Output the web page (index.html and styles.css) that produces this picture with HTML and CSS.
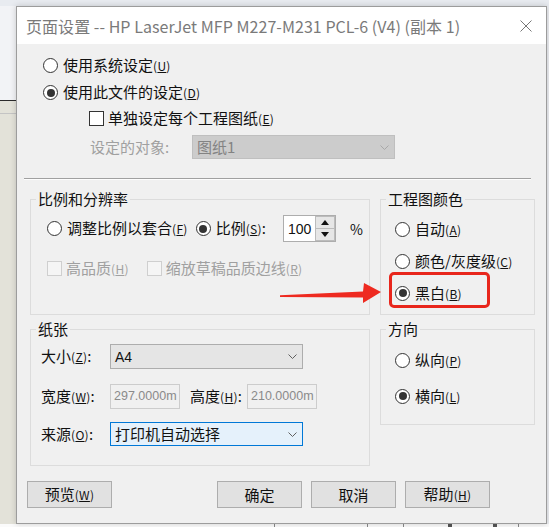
FILE: index.html
```html
<!DOCTYPE html>
<html lang="zh-CN">
<head>
<meta charset="utf-8">
<title>页面设置</title>
<link rel="stylesheet" href="styles.css">
</head>
<body>
<div class="dialog">
  <div class="titlebar">
    <span class="title">页面设置 -- HP LaserJet MFP M227-M231 PCL-6 (V4) (副本 1)</span>
    <svg class="close" width="12" height="12" viewBox="0 0 12 12"><path d="M0.5 0.5L11.5 11.5M11.5 0.5L0.5 11.5"/></svg>
  </div>
  <div class="body">
    <div class="top">
      <div class="row r1"><span class="radio"></span><span>使用系统设定<span class="mn">(<u>U</u>)</span></span></div>
      <div class="row r2"><span class="radio on"></span><span>使用此文件的设定<span class="mn">(<u>D</u>)</span></span></div>
      <div class="row r3"><span class="check"></span><span>单独设定每个工程图纸<span class="mn">(<u>E</u>)</span></span></div>
      <div class="row r4">
        <span class="lbl-dis">设定的对象:</span>
        <div class="combo dis"><span class="ctext">图纸1</span><svg class="chev" width="9" height="5" viewBox="0 0 9 5"><path d="M0.5 0.5L4.5 4.5L8.5 0.5"/></svg></div>
      </div>
    </div>
    <div class="sep"></div>
    <div class="grouprow g1">
      <fieldset class="grp scale">
        <legend>比例和分辨率</legend>
        <div class="srow">
          <span class="radio"></span><span>调整比例以套合<span class="mn">(<u>F</u>)</span></span>
          <span class="radio on r-scale"></span><span>比例<span class="mn">(<u>S</u>)</span>:</span>
          <div class="spin"><span class="stext">100</span>
            <div class="sbtns">
              <span class="sbtn"><svg width="8" height="5" viewBox="0 0 8 5"><path d="M4 0L8 5H0Z"/></svg></span>
              <span class="sbtn"><svg width="8" height="5" viewBox="0 0 8 5"><path d="M0 0H8L4 5Z"/></svg></span>
            </div>
          </div>
          <span class="pct">%</span>
        </div>
        <div class="crow">
          <span class="check dis"></span><span class="distext">高品质<span class="mn">(<u>H</u>)</span></span>
          <span class="check dis c2"></span><span class="distext">缩放草稿品质边线<span class="mn">(<u>R</u>)</span></span>
        </div>
      </fieldset>
      <fieldset class="grp color">
        <legend>工程图颜色</legend>
        <div class="crad"><span class="radio"></span><span>自动<span class="mn">(<u>A</u>)</span></span></div>
        <div class="crad"><span class="radio"></span><span>颜色/灰度级<span class="mn">(<u>C</u>)</span></span></div>
        <div class="crad"><span class="radio on"></span><span>黑白<span class="mn">(<u>B</u>)</span></span></div>
      </fieldset>
    </div>
    <div class="grouprow g2">
      <fieldset class="grp paper">
        <legend>纸张</legend>
        <div class="prow p1">
          <span class="plbl">大小<span class="mn">(<u>Z</u>)</span>:</span>
          <div class="combo size"><span class="ctext latin">A4</span><svg class="chev" width="9" height="5" viewBox="0 0 9 5"><path d="M0.5 0.5L4.5 4.5L8.5 0.5"/></svg></div>
        </div>
        <div class="prow p2">
          <span class="plbl">宽度<span class="mn">(<u>W</u>)</span>:</span>
          <div class="field">297.0000m</div>
          <span class="hlbl">高度<span class="mn">(<u>H</u>)</span>:</span>
          <div class="field">210.0000m</div>
        </div>
        <div class="prow p3">
          <span class="plbl">来源<span class="mn">(<u>O</u>)</span>:</span>
          <div class="combo src"><span class="ctext">打印机自动选择</span><svg class="chev" width="9" height="5" viewBox="0 0 9 5"><path d="M0.5 0.5L4.5 4.5L8.5 0.5"/></svg></div>
        </div>
      </fieldset>
      <fieldset class="grp orient">
        <legend>方向</legend>
        <div class="orad"><span class="radio"></span><span>纵向<span class="mn">(<u>P</u>)</span></span></div>
        <div class="orad"><span class="radio on"></span><span>横向<span class="mn">(<u>L</u>)</span></span></div>
      </fieldset>
    </div>
    <div class="buttons">
      <button class="btn">预览<span class="mn">(<u>W</u>)</span></button>
      <button class="btn ok">确定</button>
      <button class="btn">取消</button>
      <button class="btn">帮助<span class="mn">(<u>H</u>)</span></button>
    </div>
  </div>
</div>
<div class="mark-box"></div>
<svg class="mark-arrow" width="106" height="26" viewBox="0 0 106 26"><path d="M2 15.2L85 11.6L86 3L103 12L85 23L85 17.4L2 16.9Z"/></svg>
</body>
</html>
```
FILE: styles.css
```css
* { box-sizing: border-box; }
html, body { margin: 0; padding: 0; }
body {
  width: 549px;
  height: 527px;
  overflow: hidden;
  position: relative;
  font-family: "Noto Sans CJK SC", "Noto Sans", sans-serif;
  font-size: 15px;
  color: #111;
  background:
    linear-gradient(#e8ebf0, #e8ebf0) 0 0 / 100% 6px no-repeat,
    linear-gradient(#8a8a8a, #8a8a8a) 274px 524px / 1px 3px no-repeat,
    linear-gradient(#8a8a8a, #8a8a8a) 367px 524px / 1px 3px no-repeat,
    linear-gradient(#8a8a8a, #8a8a8a) 403px 524px / 1px 3px no-repeat,
    linear-gradient(#555, #555) 448px 524px / 4px 3px no-repeat,
    linear-gradient(#555, #555) 493px 524px / 4px 3px no-repeat,
    linear-gradient(#8a8a8a, #8a8a8a) 518px 524px / 1px 3px no-repeat,
    linear-gradient(#fbfbfb, #fbfbfb) 0 524px / 100% 3px no-repeat,
    linear-gradient(to bottom, #f2f3f6 0 100px, #2b2b2b 100px 101px, #e3e2d9 101px 113px, #c4c4c4 113px 114px, #e3e2d9 114px) 0 0 / 16px 100% no-repeat,
    #eceef2;
}

.dialog {
  position: absolute;
  left: 16px;
  top: 6px;
  width: 531px;
  height: 518px;
  border: 1px solid #9c9c9c;
  background: #f0f0f0;
  box-shadow: 0 0 6px rgba(0, 0, 0, 0.18);
  display: flex;
  flex-direction: column;
}

.titlebar {
  height: 37px;
  flex: none;
  background: #fff;
  display: flex;
  align-items: center;
  padding: 0 14px 0 9px;
}
.title {
  flex: 1;
  color: #7a7a7a;
  font-size: 16px;
  letter-spacing: 0.05px;
  white-space: nowrap;
  line-height: 20px;
}
.close path { stroke: #777; stroke-width: 1; fill: none; }

.body { flex: 1; display: flex; flex-direction: column; }

.mn { font-size: 12px; letter-spacing: 0.3px; }
.mn u { text-underline-offset: 1px; }

.radio {
  width: 15px;
  height: 15px;
  flex: none;
  border: 1px solid #333;
  border-radius: 50%;
  background: #fff;
  display: inline-flex;
  align-items: center;
  justify-content: center;
  margin-right: 5px;
}
.radio.on::after {
  content: "";
  width: 8px;
  height: 8px;
  border-radius: 50%;
  background: #333;
}
.check {
  width: 15px;
  height: 15px;
  flex: none;
  border: 1px solid #333;
  background: #fff;
  margin-right: 4px;
}
.check.dis { border-color: #cfcfcf; background: #f5f5f5; }

.top { padding: 8px 0 0 26px; }
.row { display: flex; align-items: center; line-height: 20px; }
.r1, .r2 { height: 27px; }
.r3 { height: 25px; padding-left: 46px; }
.r4 { height: 24px; margin-top: 4px; padding-left: 47px; }
.lbl-dis { width: 102px; color: #a0a0a0; }

.combo {
  height: 24px;
  display: flex;
  align-items: center;
  padding: 0 5px 0 4px;
  border: 1px solid #adadad;
  background: #e5e5e5;
  line-height: 20px;
}
.ctext { flex: 1; white-space: nowrap; }
.ctext.latin { font-family: "Liberation Sans", sans-serif; font-size: 14px; }
.chev path { stroke: #606060; stroke-width: 1; fill: none; }
.combo.dis { width: 203px; background: #cccccc; border-color: #bfbfbf; color: #838383; }
.combo.dis .chev path { stroke: #a8a8a8; }

.sep {
  height: 2px;
  margin: 19px 15px 0 7px;
  border-top: 1px solid #a0a0a0;
  border-bottom: 1px solid #fdfdfd;
}

.grouprow { display: flex; gap: 10px; margin-left: 13px; align-items: flex-start; }
.g1 { margin-top: 9px; }
.g2 { margin-top: 4px; }

.grp {
  margin: 0;
  padding: 0;
  border: 1px solid #dcdcdc;
  min-width: 0;
}
.grp legend {
  padding: 0 2px;
  line-height: 20px;
  font-size: 15px;
}
.scale { width: 340px; height: 126px; padding-left: 16px; }
.scale legend { margin-left: -11px; }
.color { width: 155px; height: 126px; padding-left: 14px; }
.color legend { margin-left: -9px; }
.paper { width: 340px; height: 147px; padding-left: 10px; }
.paper legend { margin-left: -5px; }
.orient { width: 155px; height: 106px; padding-left: 14px; }
.orient legend { margin-left: -9px; }

.srow { display: flex; align-items: center; height: 27px; margin-top: 6px; line-height: 20px; }
.r-scale { margin-left: 8px; }
.spin {
  width: 53px;
  height: 27px;
  margin-left: 17px;
  display: flex;
  align-items: stretch;
  border: 1px solid #adadad;
  background: #fff;
}
.stext { flex: 1; padding-left: 4px; display: flex; align-items: center; font-family: "Liberation Sans", sans-serif; font-size: 14px; }
.sbtns { width: 20px; display: flex; flex-direction: column; }
.sbtn {
  flex: 1;
  display: flex;
  align-items: center;
  justify-content: center;
  background: #e6e6e6;
  border: 1px solid #bcbcbc;
}
.sbtn + .sbtn { border-top: none; }
.sbtn path { fill: #111; }
.pct { margin-left: 14px; font-size: 14px; }

.crow { display: flex; align-items: center; height: 25px; margin-top: 14px; line-height: 20px; }
.distext { color: #a0a0a0; }
.c2 { margin-left: 18px; }

.crad { display: flex; align-items: center; height: 32px; line-height: 20px; }
.crad:first-of-type { margin-top: 4px; }

.prow { display: flex; align-items: center; line-height: 20px; }
.p1 { height: 25px; margin-top: 5px; }
.p2 { height: 25px; margin-top: 15px; }
.p3 { height: 24px; margin-top: 13px; }
.plbl { width: 69px; flex: none; }
.hlbl { width: 57px; margin-left: 10px; flex: none; }
.combo.size { width: 193px; height: 25px; }
.combo.src { width: 193px; background: #e5f1fb; border-color: #0078d7; }
.field {
  width: 70px;
  height: 25px;
  border: 1px solid #cccccc;
  background: #f0f0f0;
  color: #8a8a8a;
  font-family: "Liberation Sans", sans-serif;
  font-size: 12.5px;
  line-height: 23px;
  padding-left: 3px;
  white-space: nowrap;
}

.orad { display: flex; align-items: center; height: 36px; line-height: 20px; }
.orad:first-of-type { margin-top: 3px; }

.buttons {
  display: flex;
  gap: 9px;
  margin-top: 15px;
  padding: 0 56px 0 10px;
}
.btn {
  width: 85px;
  height: 27px;
  padding: 0;
  border: 1px solid #adadad;
  background: #e1e1e1;
  font-family: inherit;
  font-size: 15px;
  color: #111;
  line-height: 20px;
}
.ok { margin-left: auto; }

.mark-box {
  position: absolute;
  left: 389px;
  top: 272px;
  width: 101px;
  height: 36px;
  border: 3px solid #e8261c;
  border-radius: 5px;
}
.mark-arrow {
  position: absolute;
  left: 278px;
  top: 280px;
}
.mark-arrow path { fill: #ee2a20; }
```
